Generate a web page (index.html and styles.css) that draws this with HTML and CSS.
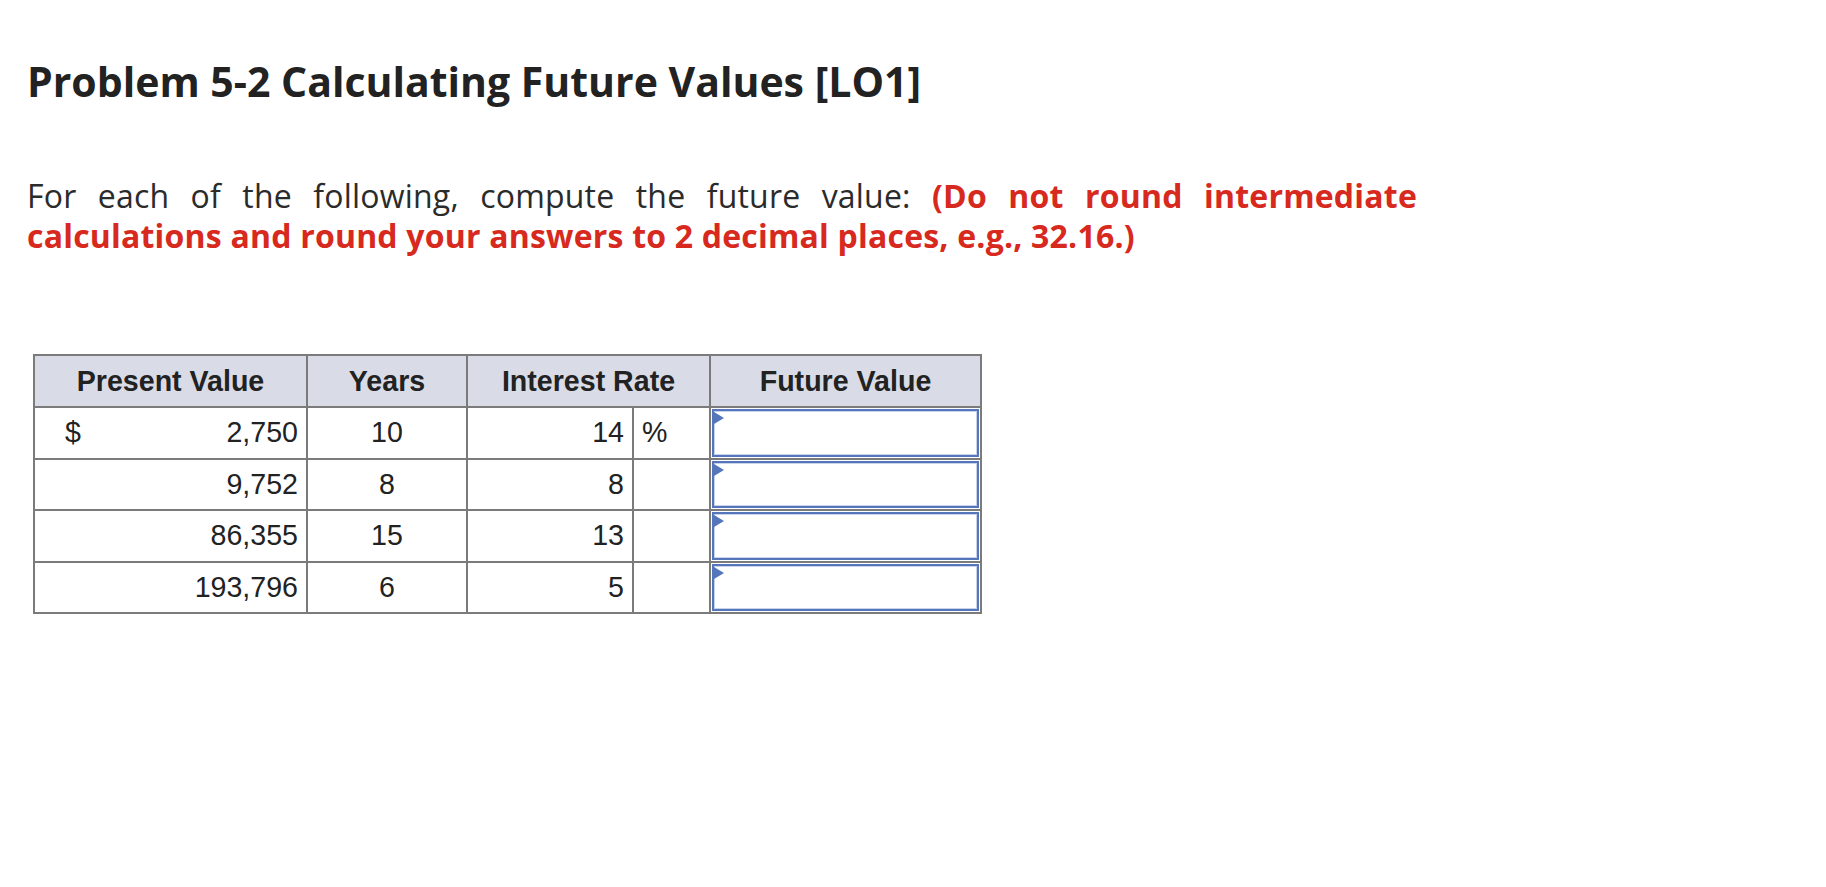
FILE: index.html
```html
<!DOCTYPE html>
<html lang="en">
<head>
<meta charset="utf-8">
<title>Problem 5-2 Calculating Future Values</title>
<link rel="stylesheet" href="styles.css">
</head>
<body>
<main class="page">
  <h1 class="title">Problem 5-2 Calculating Future Values [LO1]</h1>
  <p class="prompt">For each of the following, compute the future value: <strong class="hint">(Do not round intermediate calculations and round your answers to 2 decimal places, e.g., 32.16.)</strong></p>
  <table class="fv-table">
    <colgroup>
      <col class="c-pv">
      <col class="c-yr">
      <col class="c-ir">
      <col class="c-unit">
      <col class="c-fv">
    </colgroup>
    <thead>
      <tr>
        <th>Present Value</th>
        <th>Years</th>
        <th colspan="2">Interest Rate</th>
        <th>Future Value</th>
      </tr>
    </thead>
    <tbody>
      <tr>
        <td class="num"><span class="cur">$</span>2,750</td>
        <td class="mid">10</td>
        <td class="num">14</td>
        <td class="unit">%</td>
        <td class="ans"><div class="box"></div></td>
      </tr>
      <tr>
        <td class="num">9,752</td>
        <td class="mid">8</td>
        <td class="num">8</td>
        <td class="unit"></td>
        <td class="ans"><div class="box"></div></td>
      </tr>
      <tr>
        <td class="num">86,355</td>
        <td class="mid">15</td>
        <td class="num">13</td>
        <td class="unit"></td>
        <td class="ans"><div class="box"></div></td>
      </tr>
      <tr>
        <td class="num">193,796</td>
        <td class="mid">6</td>
        <td class="num">5</td>
        <td class="unit"></td>
        <td class="ans"><div class="box"></div></td>
      </tr>
    </tbody>
  </table>
</main>
</body>
</html>
```

FILE: styles.css
```css
html, body {
  margin: 0;
  padding: 0;
  background: #ffffff;
}

.page {
  padding: 0 0 0 27px;
  font-family: "Open Sans", "Lato", sans-serif;
  color: #222222;
}

.title {
  margin: 0;
  padding-top: 56px;
  font-family: "Open Sans", sans-serif;
  font-weight: 700;
  font-size: 41px;
  line-height: 50px;
  color: #222222;
}

.prompt {
  width: 1390px;
  margin: 70px 0 0 0;
  font-size: 32px;
  line-height: 40px;
  letter-spacing: 0.2px;
  text-align: justify;
  color: #2b2b2b;
}

.hint {
  font-weight: 700;
  color: #d7291d;
}

.fv-table {
  margin: 98px 0 0 6px;
  width: 947px;
  border-collapse: collapse;
  table-layout: fixed;
  font-family: "Liberation Sans", Arial, sans-serif;
  font-size: 28.6px;
  color: #222222;
}

.c-pv { width: 273px; }
.c-yr { width: 160px; }
.c-ir { width: 166px; }
.c-unit { width: 77px; }
.c-fv { width: 271px; }

.fv-table th,
.fv-table td {
  border: 2px solid #7b7b7b;
  height: 48.5px;
  padding: 0 8px;
  vertical-align: middle;
  box-sizing: border-box;
}

.fv-table th {
  height: 52px;
  background: #d9dce6;
  font-weight: 700;
  text-align: center;
}

.num {
  text-align: right;
}

.cur {
  float: left;
  padding-left: 22px;
}

.mid {
  text-align: center;
}

.unit {
  text-align: left;
}

.fv-table td.ans {
  padding: 1px;
}

.box {
  position: relative;
  height: 43.5px;
  border: 2.5px solid #5676bb;
  box-shadow: inset 0 0 0 1px #c8d2ea;
  background: #ffffff;
}

.box::before {
  content: "";
  position: absolute;
  top: 1px;
  left: 0;
  border-style: solid;
  border-width: 6px 0 6px 10px;
  border-color: transparent transparent transparent #5676bb;
}
```
